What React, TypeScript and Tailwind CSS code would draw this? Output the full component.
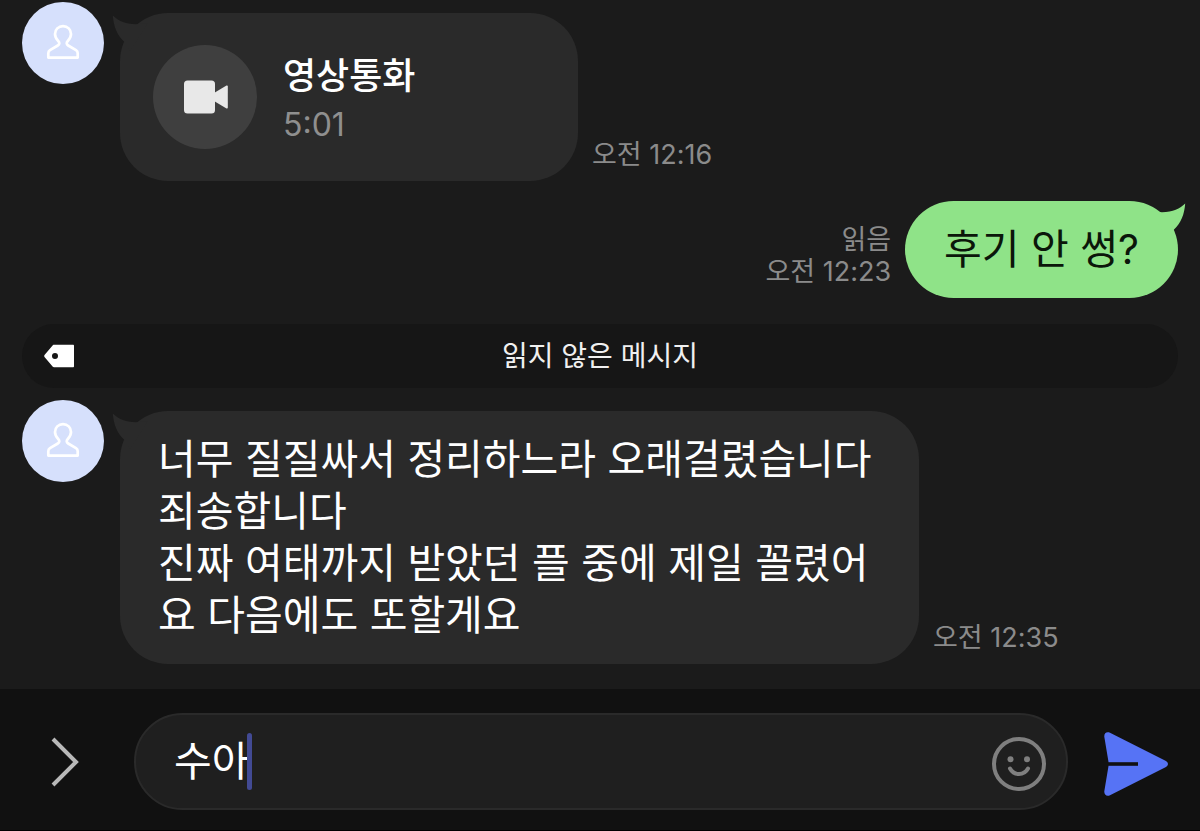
import { useState } from 'react'
import type { ReactNode } from 'react'

function Avatar() {
  return (
    <div className="flex size-[82px] shrink-0 items-center justify-center rounded-full bg-[#d6e0fc]">
      <svg width="34" height="38" viewBox="0 0 34 38" fill="none" stroke="#fff" strokeWidth="2.700" strokeLinejoin="round">
        <path d="M17 2.200C12.400 2.200 9 5.400 9 10c0 3 1.300 5 3.200 7 1.600 1.700 1.500 3.400-.4 4.500L4 26.200c-1.200.8-1.700 1.600-1.700 3v4.400h29.400v-4.400c0-1.400-.5-2.200-1.700-3l-7.800-4.700c-1.900-1.100-2-2.800-.4-4.500 1.900-2 3.200-4 3.200-7 0-4.600-3.400-7.800-8-7.800Z" />
      </svg>
    </div>
  )
}

function Tail({ side }: { side: 'left' | 'right' }) {
  return (
    <svg
      width="36"
      height="36"
      viewBox="0 0 36 36"
      className={side === 'left' ? 'absolute -left-2 top-0.5 fill-[#2a2a2a]' : 'absolute -right-2 top-0.5 -scale-x-100 fill-[#8fe388]'}
    >
      <path d="M.8.5C6 5.500 13 9 24 9.300L36 8 18 36l-6-9.500C5 20 1.500 11 .8.500Z" />
    </svg>
  )
}

function Received({ time, children }: { time: string; children: ReactNode }) {
  return (
    <div className="flex items-start gap-4 px-[22px]">
      <Avatar />
      <div className="mt-[11px] flex min-w-0 items-end gap-3.5">
        <div className="relative min-w-0 rounded-[48px] bg-[#2a2a2a]">
          <Tail side="left" />
          {children}
        </div>
        <Time>{time}</Time>
      </div>
    </div>
  )
}

function Time({ children }: { children: ReactNode }) {
  return <time className="shrink-0 pb-2.5 text-[27px] leading-8 text-[#8b8b8b]">{children}</time>
}

export default function App() {
  const [draft, setDraft] = useState('수아')

  return (
    <div className="flex min-h-screen flex-col bg-[#1b1b1b] font-['Inter','Noto_Sans_CJK_KR',sans-serif] text-white">
      <main className="grow pt-0.5 pb-[25px]">
        <Received time="오전 12:16">
          <div className="flex w-[458px] max-w-full items-center gap-[26px] px-[33px] py-8">
            <div className="flex size-[104px] shrink-0 items-center justify-center rounded-full bg-[#3f3f3f]">
              <svg width="46" height="34" viewBox="0 0 46 34" fill="#e8e8e8">
                <rect x="2" y="0.500" width="31" height="33" rx="3.500" />
                <path d="M32 13 44.500 5.600c.8-.4 1.300 0 1.300.8v21.200c0 .8-.5 1.200-1.300.8L32 21Z" />
              </svg>
            </div>
            <div className="pt-1.5">
              <p className="text-4xl leading-[50px] font-medium">영상통화</p>
              <p className="text-[32px] leading-[48px] text-[#8f8f8f]">5:01</p>
            </div>
          </div>
        </Received>

        <div className="mt-5 flex items-end justify-end gap-3.5 px-[22px]">
          <div className="pb-2.5 text-right text-[27px] leading-8 text-[#8b8b8b]">
            <p>읽음</p>
            <time className="block">오전 12:23</time>
          </div>
          <div className="relative rounded-[49px] bg-[#8fe388] px-[39px] pt-[22px] pb-[23px]">
            <Tail side="right" />
            <p className="text-[41px] leading-[52px] text-[#0b160a]">후기 안 썽?</p>
          </div>
        </div>

        {/* Unread divider */}
        <div className="mx-[22px] mt-[26px] flex h-16 items-center rounded-full bg-[#161616] px-[22px]">
          <svg width="30" height="24" viewBox="0 0 30 24" fill="#fff">
            <path
              fillRule="evenodd"
              d="M8.800 1.200C9.200.8 9.600.7 10 .7h19c.6 0 1 .4 1 1v20.600c0 .6-.4 1-1 1H10c-.5 0-.9-.2-1.200-.5L.5 12.900c-.5-.6-.5-1.200 0-1.800ZM11 9a3 3 0 1 0 0 6 3 3 0 0 0 0-6Z"
            />
          </svg>
          <p className="grow pr-[30px] text-center text-[28px] leading-10 text-[#f0f0f0]">읽지 않은 메시지</p>
        </div>

        <div className="mt-3">
          <Received time="오전 12:35">
            <p className="max-w-[799px] pt-[22px] pr-[46px] pb-[23px] pl-[38px] text-[41px] leading-[52px] break-all">
              너무 질질싸서 정리하느라 오래걸렸습니다
              <br />
              죄송합니다
              <br />
              진짜 여태까지 받았던 플 중에 제일 꼴렸어요 다음에도 또할게요
            </p>
          </Received>
        </div>
      </main>

      <footer className="flex items-center border-b border-black bg-[#111] pt-6 pb-5">
        <button aria-label="메뉴 열기" className="flex w-[134px] shrink-0 pl-[50px]">
          <svg width="30" height="50" viewBox="0 0 30 50" fill="none" stroke="#b9b9b9" strokeWidth="4">
            <path d="M3 2 26 25 3 48" />
          </svg>
        </button>
        <div className="flex h-[97px] min-w-0 grow items-center rounded-full border-2 border-[#2a2a2a] bg-[#1f1f1f] pr-5 pl-[38px]">
          <input
            aria-label="메시지 입력"
            value={draft}
            onChange={e => setDraft(e.target.value)}
            className="field-sizing-content h-16 max-w-full min-w-0 pb-2 text-[41px] leading-[52px] caret-transparent outline-none"
          />
          <span className="-ml-0.5 h-[57px] w-[5px] shrink-0 rounded-sm bg-[#424a94]" />
          <button aria-label="이모티콘" className="ml-auto shrink-0 pt-1">
            <svg width="54" height="54" viewBox="0 0 54 54" fill="none" stroke="#7f7f7f" strokeWidth="4" strokeLinecap="round">
              <circle cx="27" cy="27" r="25" />
              <path d="M18 31.500c4 7.300 14 7.300 18 0" />
              <circle cx="18.500" cy="22.300" r="3" fill="#7f7f7f" stroke="none" />
              <circle cx="35" cy="22.300" r="3" fill="#7f7f7f" stroke="none" />
            </svg>
          </button>
        </div>
        <button aria-label="보내기" className="flex w-[132px] shrink-0 pt-1 pl-9">
          <svg width="64" height="64" viewBox="0 0 64 64">
            <path
              fill="#5673f5"
              d="M6 .7 61.500 28.800c3.300 1.800 3.300 4.600 0 6.400L6 63.300c-3.500 1.500-6-.5-5.700-4L4.500 34V30L.3 4.700C0 1.200 2.500-.8 6 .7Z"
            />
            <path fill="#111" d="M4 30.200h30v3.600H4z" />
          </svg>
        </button>
      </footer>
    </div>
  )
}
